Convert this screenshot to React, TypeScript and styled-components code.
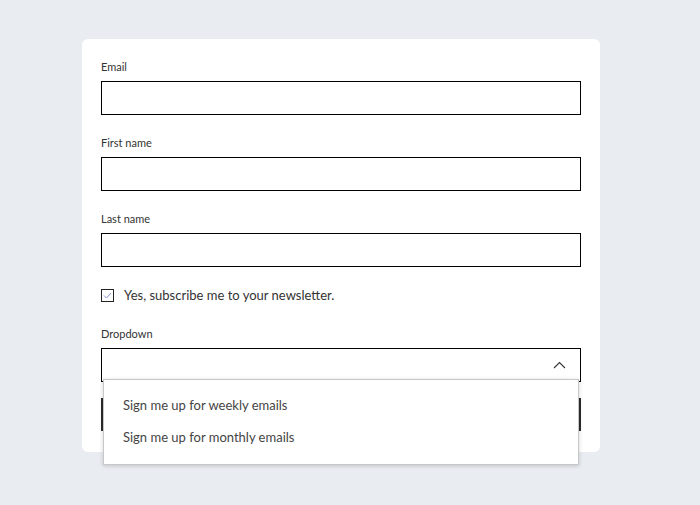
import React from "react";
import styled, { createGlobalStyle } from "styled-components";

const Global = createGlobalStyle`
  html, body { margin: 0; padding: 0; background: #e9ecf1; }
  body { font-family: Lato, "Noto Sans", sans-serif; }
  * { box-sizing: border-box; }
`;

const Page = styled.div`
  width: 700px;
  height: 505px;
  padding: 39px 0 0 82px;
  display: flex;
  align-items: flex-start;
`;

const Card = styled.div`
  width: 518px;
  height: 413px;
  background: #fff;
  border-radius: 6px;
  padding: 20px 19px 18px 19px;
  display: flex;
  flex-direction: column;
`;

const Field = styled.div<{ $gap?: number }>`
  display: flex;
  flex-direction: column;
  margin-bottom: ${(p) => p.$gap ?? 20}px;
  position: relative;
`;

const Label = styled.label`
  font-size: 11px;
  line-height: 16px;
  color: #333;
  font-weight: 400;
  margin-bottom: 6px;
`;

const Input = styled.div`
  width: 480px;
  height: 34px;
  border: 1px solid #000;
  background: #fff;
`;

const CheckRow = styled.div`
  display: flex;
  align-items: center;
  height: 20px;
  margin-top: -2px;
  margin-bottom: 21px;
  gap: 10px;
`;

const Box = styled.div`
  width: 13px;
  height: 13px;
  border: 1px solid #222;
  display: flex;
  align-items: center;
  justify-content: center;
  margin-top: 1px;
`;

const CheckText = styled.span`
  font-size: 13px;
  color: #333;
`;

const Select = styled.div`
  width: 480px;
  height: 34px;
  border: 1px solid #000;
  display: flex;
  align-items: center;
  justify-content: flex-end;
  padding-right: 14px;
`;

const Menu = styled.div`
  position: absolute;
  top: 53px;
  left: 2px;
  width: 476px;
  background: #fff;
  border: 1px solid #c8c8c8;
  box-shadow: 0 1px 4px rgba(0, 0, 0, 0.18);
  padding: 9px 0 11px;
  z-index: 2;
`;

const Option = styled.div`
  height: 32px;
  display: flex;
  align-items: center;
  padding-left: 19px;
  font-size: 13px;
  color: #444;
`;

const Button = styled.div`
  width: 480px;
  height: 33px;
  background: #2b2b2b;
  margin-top: -2px;
`;

export default function App() {
  return (
    <>
      <Global />
      <Page>
        <Card>
          <Field>
            <Label>Email</Label>
            <Input />
          </Field>
          <Field>
            <Label>First name</Label>
            <Input />
          </Field>
          <Field>
            <Label>Last name</Label>
            <Input />
          </Field>
          <CheckRow>
            <Box>
              <svg width="9" height="7" viewBox="0 0 9 7">
                <path d="M1 3.5 L3.5 6 L8 1" fill="none" stroke="#8c90d6" strokeWidth="1" />
              </svg>
            </Box>
            <CheckText>Yes, subscribe me to your newsletter.</CheckText>
          </CheckRow>
          <Field $gap={18}>
            <Label>Dropdown</Label>
            <Select>
              <svg width="13" height="8" viewBox="0 0 13 8">
                <path d="M1 7 L6.5 1.5 L12 7" fill="none" stroke="#333" strokeWidth="1.1" />
              </svg>
            </Select>
            <Menu>
              <Option>Sign me up for weekly emails</Option>
              <Option>Sign me up for monthly emails</Option>
            </Menu>
          </Field>
          <Button />
        </Card>
      </Page>
    </>
  );
}
